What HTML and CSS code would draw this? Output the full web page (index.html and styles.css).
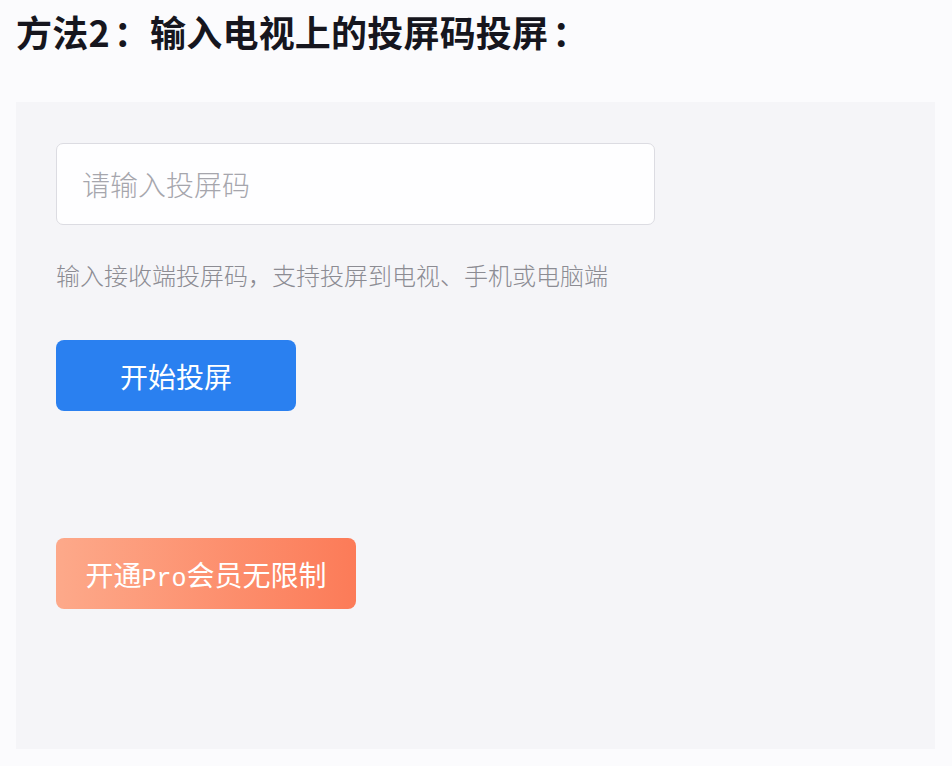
FILE: index.html
```html
<!DOCTYPE html>
<html lang="zh-CN">
<head>
<meta charset="UTF-8">
<meta name="viewport" content="width=device-width, initial-scale=1.0">
<title>输入投屏码投屏</title>
<link rel="stylesheet" href="styles.css">
</head>
<body>
<h1 class="title">方法2<span class="colon">：</span>输入电视上的投屏码投屏<span class="colon">：</span></h1>
<div class="panel">
  <input class="code-input" type="text" placeholder="请输入投屏码">
  <p class="hint">输入接收端投屏码，支持投屏到电视、手机或电脑端</p>
  <button class="btn-start">开始投屏</button>
  <button class="btn-pro">开通<span class="pro">Pro</span>会员无限制</button>
</div>
</body>
</html>
```

FILE: styles.css
```css
/* Page */
body {
  margin: 0;
  background: #fbfbfd;
  font-family: "Noto Sans CJK SC", "Noto Sans", sans-serif;
}
.title {
  margin: 0;
  padding: 8px 0 0 16px;
  height: 90px;
  box-sizing: border-box;
  font-size: 36px;
  line-height: 46px;
  font-weight: 700;
  color: #16161e;
  letter-spacing: 0.2px;
}
.title .colon {
  margin-left: 4px;
}

/* Panel */
.panel {
  margin-left: 16px;
  margin-top: 12px;
  width: 919px;
  height: 647px;
  box-sizing: border-box;
  padding: 41px 40px;
  background: #f5f5f8;
  display: flex;
  flex-direction: column;
  align-items: flex-start;
}
.code-input {
  width: 599px;
  height: 82px;
  box-sizing: border-box;
  padding: 0 25px;
  border: 1px solid #dcdce2;
  border-radius: 7px;
  background: #fefeff;
  font-family: inherit;
  font-size: 28px;
  color: #333;
  outline: none;
}
.code-input::placeholder {
  color: #a6a6ad;
  font-weight: 300;
}
.hint {
  margin: 33px 0 0;
  font-size: 24px;
  line-height: 34px;
  color: #8c8c93;
  font-weight: 300;
}
.btn-start {
  margin-top: 48px;
  width: 240px;
  height: 71px;
  border: none;
  border-radius: 8px;
  background: #2a80f0;
  color: #fff;
  font-family: inherit;
  font-size: 28px;
  cursor: pointer;
}
.btn-pro {
  margin-top: 127px;
  width: 300px;
  height: 71px;
  border: none;
  border-radius: 8px;
  background: linear-gradient(90deg, #fda98a, #fc7b58);
  color: #fff;
  font-family: inherit;
  font-size: 28px;
  cursor: pointer;
}
.pro {
  font-family: "Liberation Mono", monospace;
  font-size: 25px;
}
```
